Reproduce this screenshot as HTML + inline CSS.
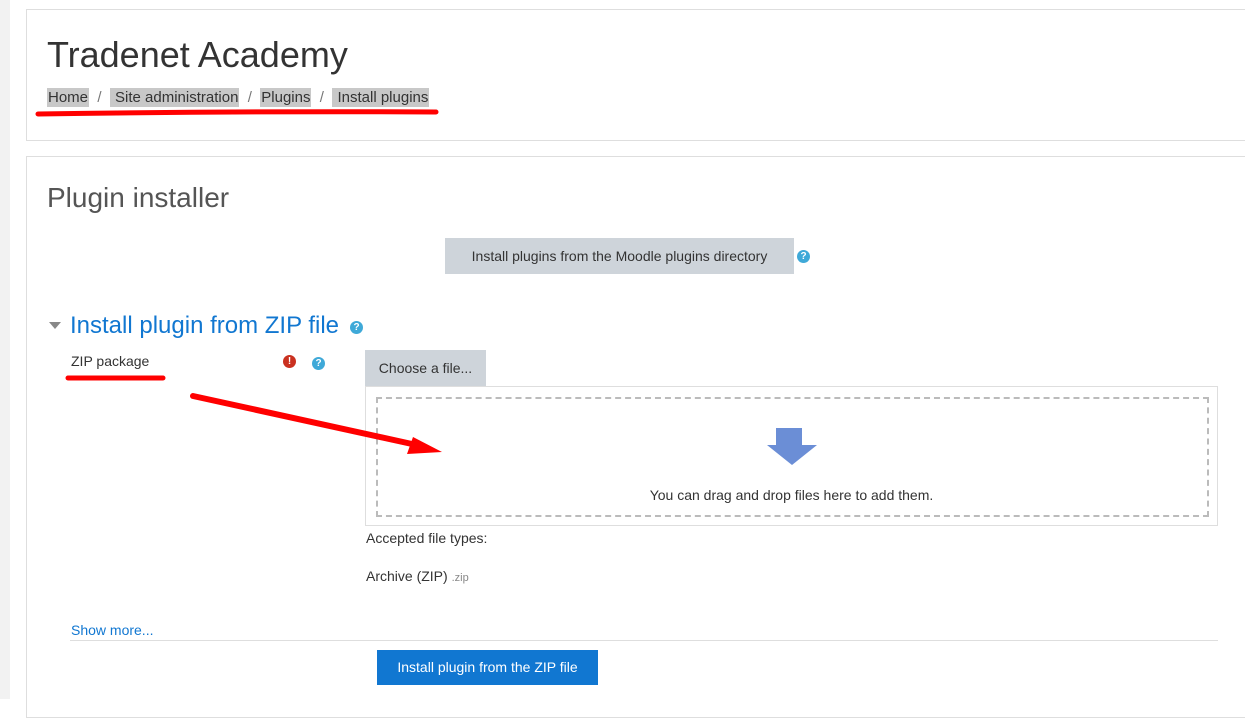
<!DOCTYPE html>
<html><head><meta charset="utf-8"><style>
body{margin:0;width:1245px;height:699px;overflow:hidden;background:#fff;font-family:"Liberation Sans",sans-serif;position:relative;color:#373a3c}
.a{position:absolute}
.card{position:absolute;border:1px solid #dedede;background:#fff}
.bc{background:#c8c8c8;font-size:15px;color:#333;padding:1px 1px;}
.q{display:inline-block;width:13px;height:13px;border-radius:50%;background:#3fa9d8;color:#fff;font-size:10px;font-weight:bold;text-align:center;line-height:13px}
</style></head><body>
<div class="a" style="left:0;top:0;width:10px;height:699px;background:#f2f2f2"></div>
<div class="card" style="left:26px;top:9px;width:1240px;height:130px"></div>
<div class="a" style="left:47px;top:34px;font-size:36px;color:#333">Tradenet Academy</div>
<div class="a" style="left:47px;top:89px;font-size:15px;color:#777;white-space:pre"><span class="bc">Home</span>  /  <span class="bc"> Site administration</span>  /  <span class="bc">Plugins</span>  /  <span class="bc"> Install plugins</span></div>
<div class="card" style="left:26px;top:156px;width:1240px;height:560px"></div>
<div class="a" style="left:47px;top:182px;font-size:28px;color:#555">Plugin installer</div>
<div class="a" style="left:445px;top:238px;width:349px;height:36px;background:#ced4da;font-size:14px;line-height:36px;text-align:center;color:#333">Install plugins from the Moodle plugins directory</div>
<span class="q a" style="left:797px;top:250px">?</span>
<div class="a" style="left:49px;top:322px;width:0;height:0;border-left:6px solid transparent;border-right:6px solid transparent;border-top:7px solid #888"></div>
<div class="a" style="left:70px;top:312px;font-size:24px;color:#1177d1">Install plugin from ZIP file</div>
<span class="q a" style="left:350px;top:321px">?</span>
<div class="a" style="left:71px;top:353px;font-size:14px;color:#333">ZIP package</div>
<span class="q a" style="left:283px;top:355px;background:#ca3120">!</span>
<span class="q a" style="left:312px;top:357px">?</span>
<div class="a" style="left:365px;top:350px;width:121px;height:36px;background:#ced4da;font-size:14px;line-height:36px;text-align:center;color:#333">Choose a file...</div>
<div class="a" style="left:365px;top:386px;width:851px;height:138px;border:1px solid #dedede"></div>
<div class="a" style="left:376px;top:397px;width:829px;height:116px;border:2px dashed #bbb"></div>
<svg class="a" style="left:766px;top:427px" width="54" height="40"><path d="M10 1H36V18H51L26 38L1 18H10Z" fill="#6b8ed6"/></svg>
<div class="a" style="left:365px;top:487px;width:853px;text-align:center;font-size:14px;color:#333">You can drag and drop files here to add them.</div>
<div class="a" style="left:366px;top:530px;font-size:14px;color:#333">Accepted file types:</div>
<div class="a" style="left:366px;top:568px;font-size:14px;color:#333">Archive (ZIP) <span style="font-size:11px;color:#888">.zip</span></div>
<div class="a" style="left:71px;top:622px;font-size:14px;color:#1177d1">Show more...</div>
<div class="a" style="left:70px;top:640px;width:1148px;border-top:1px solid #dedede"></div>
<div class="a" style="left:377px;top:650px;width:221px;height:35px;background:#1177d1;color:#fff;font-size:14px;line-height:35px;text-align:center">Install plugin from the ZIP file</div>
<svg class="a" style="left:0;top:0" width="1245" height="699">
<path d="M38 114 Q240 111 436 112" stroke="#f00" stroke-width="5" stroke-linecap="round" fill="none"/>
<path d="M68 378 L163 378" stroke="#f00" stroke-width="5" stroke-linecap="round" fill="none"/>
<path d="M193 396 L412 444" stroke="#f00" stroke-width="6" stroke-linecap="round" fill="none"/>
<path d="M407 454 L442 452 L413 437 Z" fill="#f00"/>
</svg>
</body></html>
